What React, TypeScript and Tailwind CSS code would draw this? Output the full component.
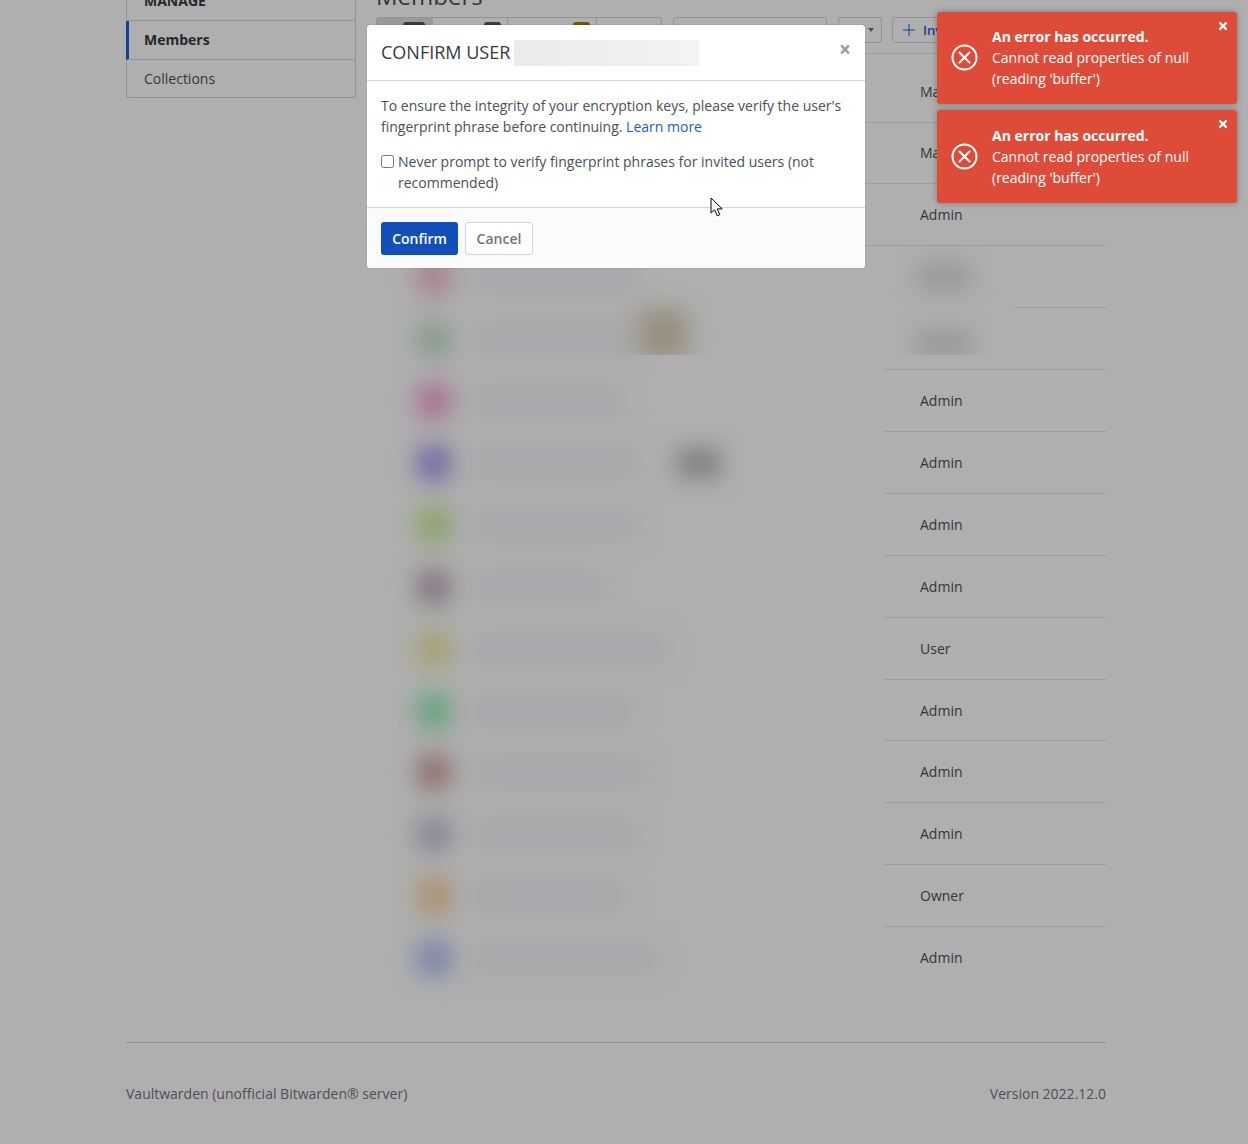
import { FaTimes } from "react-icons/fa";

const rows = [
  { role: "Manager", size: "h-[69px] pt-[8px]", fullLine: true },
  { role: "Manager", size: "h-[61px]", fullLine: true },
  { role: "Admin", size: "h-[62px]", fullLine: true },
  { role: "", size: "h-[62px]", avatar: "bg-[#eeb4c2]", blob: "w-[170px]" },
  { role: "", size: "h-[62px]", avatar: "bg-[#bcdcc6]", blob: "w-[170px]" },
  { role: "Admin", size: "h-[62px]", avatar: "bg-[#f09ad0]", blob: "w-[155px]" },
  { role: "Admin", size: "h-[62px]", avatar: "bg-[#a090e8]", blob: "w-[170px]", badge: true },
  { role: "Admin", size: "h-[62px]", avatar: "bg-[#c4e890]", blob: "w-[170px]" },
  { role: "Admin", size: "h-[62px]", avatar: "bg-[#b8a4b4]", blob: "w-[140px]" },
  { role: "User", size: "h-[62px]", avatar: "bg-[#ece49a]", blob: "w-[200px]" },
  { role: "Admin", size: "h-[61px]", avatar: "bg-[#8ee8ae]", blob: "w-[165px]", text: "mt-px" },
  { role: "Admin", size: "h-[62px]", avatar: "bg-[#c89c98]", blob: "w-[180px]" },
  { role: "Admin", size: "h-[62px]", avatar: "bg-[#bcbad4]", blob: "w-[170px]" },
  { role: "Owner", size: "h-[62px]", avatar: "bg-[#f4cc9c]", blob: "w-[158px]" },
  { role: "Admin", size: "h-[62px]", avatar: "bg-[#a8b8f0]", blob: "w-[190px]", last: true },
];

function Toast({ size }: { size: string }) {
  return (
    <div className={`relative flex w-[300px] items-center rounded-[3px] bg-[#df4b39] pl-[14px] text-white shadow-[0_0_6px_rgba(0,0,0,0.3)] ${size}`}>
      <svg width="27" height="27" viewBox="0 0 27 27" fill="none" stroke="white" strokeWidth="2" className="shrink-0">
        <circle cx="13.5" cy="13.5" r="12" />
        <path d="M8.5 8.5l10 10M18.5 8.5l-10 10" strokeLinecap="round" />
      </svg>
      <div className="ml-[14px] w-[215px]">
        <div className="font-bold">An error has occurred.</div>
        <div>Cannot read properties of null (reading 'buffer')</div>
      </div>
      <FaTimes className="absolute right-[8px] top-[8px] text-[12px]" />
    </div>
  );
}

export default function App() {
  return (
    <div
      className="relative h-[1144px] overflow-hidden bg-[#fbfbfb] pr-4 text-[14px] leading-[21px] text-[#495057]"
      style={{ fontFamily: "'Open Sans', sans-serif" }}
    >
      <div className="mx-auto w-[980px]">
        <div className="-mt-[20px] flex gap-5">
          {/* Sidebar */}
          <div className="h-[118px] w-[230px] shrink-0 rounded-b-[3px] border border-t-0 border-[#ced4da]">
            <div className="flex h-[41px] items-center border-b border-[#ced4da] pl-[17px] font-bold text-[#343a40]">MANAGE</div>
            <div className="-ml-px flex h-[39px] items-center border-b border-l-[3px] border-b-[#ced4da] border-l-[#175ddc] pb-[2px] pl-[15px] font-bold text-[#343a40]">Members</div>
            <div className="flex h-[37px] items-center pl-[17px]">Collections</div>
          </div>

          {/* Main column */}
          <div className="relative w-[730px]">
            <h1 className="h-[37px] text-[24px] leading-[31px] text-[#495057]">Members</h1>
            <div className="flex h-[26px] text-[13px]">
              <div className="flex h-full w-[286px] rounded-[3px] border border-[#ced4da]">
                <div className="flex w-[56px] justify-end bg-[#dcdcdc] pr-2 pt-1">
                  <div className="h-5 w-[22px] rounded-[3px] bg-[#555555]" />
                </div>
                <div className="flex w-[75px] justify-end border-r border-[#ced4da] pr-[6px] pt-1">
                  <div className="h-5 w-[17px] rounded-[3px] bg-[#555555]" />
                </div>
                <div className="flex w-[89px] justify-end border-r border-[#ced4da] pr-[6px] pt-1">
                  <div className="h-5 w-[17px] rounded-[3px] bg-[#9c7a10]" />
                </div>
              </div>
              <div className="ml-[11px] h-full w-[154px] rounded-[3px] border border-[#ced4da]" />
              <div className="ml-[11px] flex h-full w-[44px] items-center justify-end rounded-[3px] border border-[#ced4da] pr-[7px]">
                <div className="border-x-[3px] border-t-[4px] border-x-transparent border-t-[#6c757d]" />
              </div>
              <div className="ml-[10px] flex h-full w-[100px] items-center gap-[7px] rounded-[3px] border border-[#ced4da] pl-[9px] font-semibold text-[#175ddc]">
                <svg width="14" height="14" viewBox="0 0 14 14" stroke="currentColor" strokeWidth="1">
                  <path d="M7 1v12M1 7h12" />
                </svg>
                Invite User
              </div>
            </div>

            {/* Members table */}
            <div className="mt-[10px] border-t border-[#dee2e6]">
              {rows.map((row, i) => (
                <div key={i} className={`flex ${row.size} ${row.fullLine ? "border-b border-[#dee2e6]" : ""}`}>
                  <div className="flex w-[508px] shrink-0 items-center pl-[40px]">
                    {row.avatar && <div className={`h-[38px] w-[36px] rounded-full blur-[12px] ${row.avatar}`} />}
                    {row.blob && <div className={`ml-[18px] h-[36px] rounded-[6px] bg-[#f0f1f6] blur-[12px] ${row.blob}`} />}
                    {row.badge && <div className="ml-[36px] h-[32px] w-[46px] rounded-[6px] bg-[#bcbcbc] blur-[11px]" />}
                  </div>
                  <div className={`flex w-[222px] items-center pb-[1px] pl-[36px] ${row.last || row.fullLine ? "" : "border-b border-[#dee2e6]"}`}>
                    <span className={row.text}>{row.role}</span>
                  </div>
                </div>
              ))}
            </div>
          </div>
        </div>

        <footer className="mt-[53px] flex h-[102px] items-center justify-between border-t border-[#ced4da] text-[#6c757d]">
          <span>Vaultwarden (unofficial Bitwarden® server)</span>
          <span>Version 2022.12.0</span>
        </footer>
      </div>

      {/* Redacted patches over rows four and five */}
      <div className="absolute left-[333px] top-[246px] h-[109px] w-[425px] overflow-hidden">
        <div className="absolute left-[305px] top-[62px] h-[52px] w-[50px] rounded-[12px] bg-[#d8cdb4] blur-[12px]" />
      </div>
      <div className="absolute left-[848px] top-[246px] h-[109px] w-[167px] overflow-hidden bg-[#fbfbfb]">
        <div className="absolute left-[68px] top-[16px] h-[30px] w-[56px] rounded-[8px] bg-[#dcdcdc] blur-[11px]" />
        <div className="absolute left-[68px] top-[82px] h-[30px] w-[56px] rounded-[8px] bg-[#dcdcdc] blur-[11px]" />
      </div>

      {/* Backdrop */}
      <div className="absolute inset-0 bg-black/30" />

      {/* Confirm modal */}
      <div className="absolute left-[367px] top-[25px] w-[498px] overflow-hidden rounded-[3px] bg-white shadow-[0_0_1px_rgba(0,0,0,0.5)]">
        <div className="flex h-[56px] items-center border-b border-[#ced4da] px-[14px]">
          <span className="text-[18px] text-[#343a40]">CONFIRM USER</span>
          <div className="ml-[4px] h-[26px] w-[185px] bg-gradient-to-r from-[#e9eaec] to-[#f3f3f3]" />
          <span className="-mt-[6px] ml-auto text-[21px] font-bold leading-none text-[#9a9a9a]">×</span>
        </div>
        <div className="p-[14px]">
          <p>
            To ensure the integrity of your encryption keys, please verify the user's fingerprint phrase before continuing.{" "}
            <span className="text-[#175ddc]">Learn more</span>
          </p>
          <label className="mt-[14px] flex items-start">
            <input type="checkbox" className="mt-[3.5px] h-[13px] w-[13px] shrink-0" readOnly />
            <span className="ml-[4px]">Never prompt to verify fingerprint phrases for invited users (not recommended)</span>
          </label>
        </div>
        <div className="flex h-[61px] items-center gap-[7px] border-t border-[#ced4da] bg-[#fbfbfb] px-[14px]">
          <button className="h-[33px] w-[77px] rounded-[3px] bg-[#134fb8] font-semibold text-white">Confirm</button>
          <button className="h-[33px] w-[68px] rounded-[3px] border border-[#ced4da] bg-white font-semibold text-[#6c757d]">Cancel</button>
        </div>
      </div>

      {/* Toasts */}
      <div className="absolute right-[11px] top-[12px] flex flex-col gap-[6px]">
        <Toast size="h-[92px] pb-[2px]" />
        <Toast size="h-[93px] pb-[1px]" />
      </div>

      {/* Mouse pointer */}
      <svg width="14" height="21" viewBox="0 0 14 21" className="absolute left-[710px] top-[197px]">
        <path d="M1 1v15l3.6-3.2 2.6 6 2.6-1.1-2.6-5.8h5z" fill="white" stroke="black" strokeWidth="1" />
      </svg>
    </div>
  );
}
